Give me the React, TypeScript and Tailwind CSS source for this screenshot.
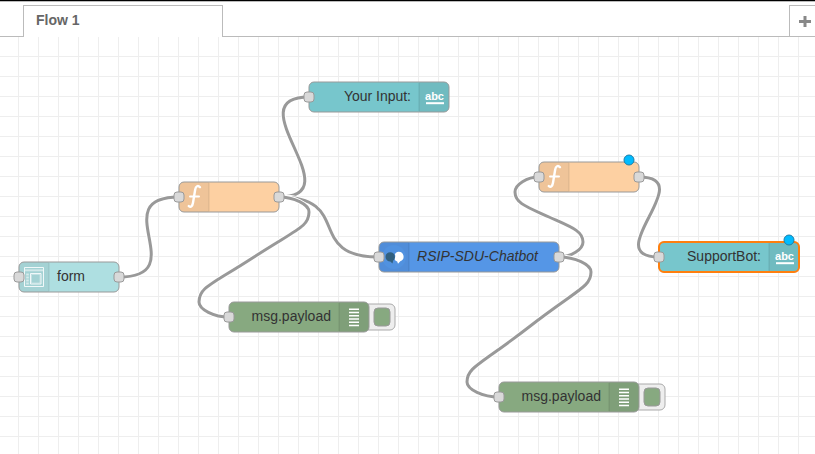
import React from "react";

type Kind = "form" | "function" | "text" | "debug" | "chatbot";

interface FlowNode {
  id: string;
  kind: Kind;
  x: number;
  y: number;
  w: number;
  label?: string;
  labelX?: number;
  labelW?: number;
  input?: boolean;
  output?: boolean;
  changed?: boolean;
  selected?: boolean;
}

const fills: Record<Kind, string> = {
  form: "#aedfe1",
  function: "#fdd0a2",
  text: "#77c6cc",
  debug: "#87a980",
  chatbot: "#5596e6",
};

const nodes: FlowNode[] = [
  { id: "form", kind: "form", x: 19, y: 262, w: 100, label: "form", labelX: 38, labelW: 28, input: true, output: true },
  { id: "fn1", kind: "function", x: 179, y: 182, w: 100, input: true, output: true },
  { id: "input", kind: "text", x: 309, y: 82, w: 140, label: "Your Input:", labelX: 35, labelW: 67, input: true },
  { id: "bot", kind: "chatbot", x: 379, y: 242, w: 180, label: "RSIP-SDU-Chatbot", labelX: 38, labelW: 121, input: true, output: true },
  { id: "dbg1", kind: "debug", x: 229, y: 302, w: 140, label: "msg.payload", labelX: 22.5, labelW: 79.5, input: true },
  { id: "fn2", kind: "function", x: 539, y: 162, w: 100, input: true, output: true, changed: true },
  { id: "support", kind: "text", x: 659, y: 242, w: 140, label: "SupportBot:", labelX: 28, labelW: 74, input: true, changed: true, selected: true },
  { id: "dbg2", kind: "debug", x: 499, y: 382, w: 140, label: "msg.payload", labelX: 22.5, labelW: 79.5, input: true },
];

const wires: [number, number, number, number][] = [
  [119, 277, 179, 197],
  [279, 197, 309, 97],
  [279, 197, 379, 257],
  [279, 197, 229, 317],
  [559, 257, 539, 177],
  [559, 257, 499, 397],
  [639, 177, 659, 257],
];

/* Bezier between two ports; wires that run backwards loop round through a midpoint. */
function wirePath(ox: number, oy: number, tx: number, ty: number): string {
  const W = 100;
  const dx = tx - ox;
  const dy = ty - oy;
  const delta = Math.hypot(dx, dy);
  if (dx > 0) {
    const s = delta < W ? 0.75 - 0.75 * ((W - delta) / W) : 0.75;
    return `M ${ox} ${oy} C ${ox + W * s} ${oy} ${tx - W * s} ${ty} ${tx} ${ty}`;
  }
  const s = 0.4 - 0.2 * Math.max(0, (W - Math.min(Math.abs(dx), Math.abs(dy))) / W);
  const midX = tx - dx / 2;
  const midY = ty - dy / 2;
  const h = dy > 0 ? 15 : -15;
  const topX = ox + W * s;
  const topY = oy + h;
  const botX = tx - W * s;
  const botY = ty - h;
  const x1 = (ox + topX) / 2;
  const x2 = (tx + botX) / 2;
  const turn = dy > 0 ? h : h * 0.75;
  const bendX = dy > 0 ? 3 : 0;
  const bendY = dy > 0 ? 17 : -15;
  return [
    `M ${ox} ${oy}`,
    `C ${x1} ${oy} ${topX} ${topY - h / 2} ${topX} ${topY}`,
    `C ${topX} ${topY + turn} ${x1 + bendX} ${topY + bendY} ${midX} ${midY}`,
    `C ${x2 - bendX} ${botY - bendY} ${botX} ${botY - turn} ${botX} ${botY}`,
    `C ${botX} ${botY + h / 2} ${x2} ${ty} ${tx} ${ty}`,
  ].join(" ");
}

function Icon({ kind, w }: { kind: Kind; w: number }) {
  if (kind === "form")
    return (
      <g fill="none" stroke="#fff" strokeOpacity=".85">
        <path d="M5.5 5.5h19v19h-19z" />
        <path d="M6 8.300h18" strokeWidth="2" strokeOpacity=".5" />
        <path d="M11.500 11.500h10.500v10.500h-10.500z" />
        <path d="M12.500 12.500h8.500v8.500h-8.500z" strokeOpacity=".35" />
        <path d="M7.200 12.500h2.600M7.200 15.500h2.600M7.200 18.500h2.600M7.200 21.500h2.600" strokeWidth="2" strokeOpacity=".55" />
      </g>
    );
  if (kind === "function")
    return (
      <g fill="none" stroke="#fff" strokeLinecap="round">
        <path d="M21 5.200c-2-2.200-4.200-1.200-4.800 2.300L14 20.800c-.6 3.600-2.200 5-4.200 3.300" strokeWidth="2.400" />
        <path d="M11 14.600h9" strokeWidth="2" />
      </g>
    );
  if (kind === "chatbot")
    return (
      <g>
        <circle cx="15" cy="15" r="12" fill="#5192e0" />
        <path d="M19.300 9.700a4.900 4.900 0 0 1 2 9.500l-2.300 2.500-.8-2.200c-1.500-.5-2.500-1.500-2.700-3 .9-1.200 1-2.700.4-4.200.7-1.700 2-2.600 3.400-2.600z" fill="#fff" />
        <path d="M11.200 10.200a4.700 4.700 0 0 1 4.700 4.700c0 1.600-.7 2.900-1.800 3.800l-.6 2.900-2.200-2a4.700 4.700 0 0 1-.1-9.400z" fill="#31607f" />
      </g>
    );
  if (kind === "debug")
    return (
      <path
        d={`M${w - 20} 7.300h10m-10 3.200h10m-10 3.300h10m-10 3.200h10m-10 3.200h10m-10 3.200h10`}
        stroke="#fff"
        strokeWidth="1.500"
      />
    );
  return <path d={`M${w - 23} 21.200h18`} stroke="#fff" strokeWidth="2" />;
}

function Port({ x }: { x: number }) {
  return <rect x={x - 5} y="10" width="10" height="10" rx="3" fill="#d9d9d9" stroke="#999" />;
}

function Node({ n }: { n: FlowNode }) {
  const right = n.kind === "text" || n.kind === "debug";
  return (
    <div className="absolute h-[30px]" style={{ left: n.x, top: n.y, width: n.w }}>
      <svg className="absolute left-0 top-0 overflow-visible" width={n.w} height="30">
        {n.kind === "debug" && (
          <g>
            <rect x={n.w - 6} y="2" width="32" height="26" rx="5" fill="#eee" stroke="#aaa" />
            <rect x={n.w + 5} y="6" width="16" height="18" rx="4" fill={fills.debug} stroke="#999" />
          </g>
        )}
        <rect width={n.w} height="30" rx="5" fill={fills[n.kind]} stroke="#999" />
        <path
          d={
            right
              ? `M${n.w - 30} .5h25a4.500 4.500 0 0 1 4.500 4.500v20a4.500 4.500 0 0 1-4.500 4.500h-25z`
              : "M30 .5H5A4.500 4.500 0 0 0 .5 5v20A4.500 4.500 0 0 0 5 29.500h25z"
          }
          fill="#000"
          fillOpacity=".055"
        />
        <path d={right ? `M${n.w - 30} 1v28` : "M30 1v28"} stroke="#000" strokeOpacity=".1" />
        {n.selected && <rect width={n.w} height="30" rx="5" fill="none" stroke="#ff7f0e" strokeWidth="2" />}
        <Icon kind={n.kind} w={n.w} />
        {n.label && (
          <text
            x={n.labelX}
            y="19"
            textLength={n.labelW}
            fill="#333"
            className={n.kind === "chatbot" ? "text-sm italic" : "text-sm"}
          >
            {n.label}
          </text>
        )}
        {n.input && <Port x={0} />}
        {n.output && <Port x={n.w} />}
        {n.changed && <circle cx={n.w - 10} cy="-2" r="5" fill="#00bcff" stroke="#1f7ea8" />}
      </svg>
      {n.kind === "text" && (
        <span className="absolute right-[5px] top-[8px] text-[11px] font-bold leading-[13px] text-white">abc</span>
      )}
    </div>
  );
}

export default function App() {
  return (
    <div className="flex h-[454px] w-[815px] flex-col overflow-hidden bg-white font-['Liberation_Sans',Arial,sans-serif]">
      <header className="flex h-[37px] shrink-0 border-t border-black">
        <div className="flex flex-1 border-t border-[#bbb]">
          <div className="w-[23px] border-b border-[#bbb]" />
          <div className="mt-[3px] flex w-[200px] items-start border-x border-t border-[#bbb] pl-3 pt-1 text-sm font-bold leading-5 text-[#666]">
            Flow 1
          </div>
          <div className="flex-1 border-b border-[#bbb]" />
          <div className="mt-[3px] w-[26px] border-b border-l border-t border-[#bbb]">
            <svg width="25" height="30">
              <path d="M9 15.500h12M15 10v11" stroke="#888" strokeWidth="3" />
            </svg>
          </div>
        </div>
      </header>
      <main className="relative flex-1 overflow-hidden bg-[linear-gradient(to_right,#eee_1px,transparent_1px),linear-gradient(to_bottom,#eee_1px,transparent_1px)] bg-[size:20px_20px] bg-[position:18px_19px]">
        <div className="absolute left-0 top-[-37px] h-[454px] w-[815px]">
          <svg className="absolute inset-0" width="815" height="454" fill="none">
            {wires.map((w, i) => (
              <g key={i}>
                <path d={wirePath(...w)} stroke="#fff" strokeWidth="5" />
                <path d={wirePath(...w)} stroke="#999" strokeWidth="3" />
              </g>
            ))}
          </svg>
          {nodes.map((n) => (
            <Node key={n.id} n={n} />
          ))}
        </div>
      </main>
    </div>
  );
}
